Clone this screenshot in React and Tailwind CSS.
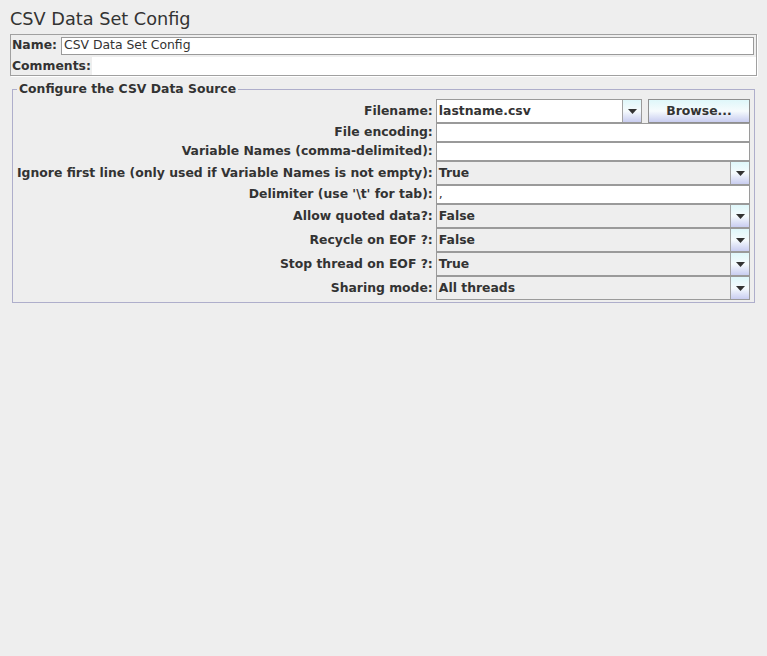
import React from "react";

const font = { fontFamily: '"DejaVu Sans", Verdana, sans-serif' };

function Arrow() {
  return (
    <div className="flex h-full w-[19px] shrink-0 items-center justify-center border-l border-[#a3a3a3] bg-gradient-to-b from-[#dff7fa] via-[#f6fbfd] to-[#c9cdf0]">
      <svg width="9" height="5" viewBox="0 0 9 5">
        <polygon points="0,0 9,0 4.5,5" fill="#333333" />
      </svg>
    </div>
  );
}

function Combo({ value, white }) {
  return (
    <div className={`flex h-[24px] items-stretch border border-[#9a9a9a] ${white ? "bg-white" : "bg-[#eeeeee]"}`}>
      <div className="flex flex-1 items-center pl-[2px] text-[12.4px] font-bold text-[#333333]">{value}</div>
      <Arrow />
    </div>
  );
}

function Field({ value }) {
  return (
    <div className="flex h-[19px] items-center border border-[#9a9a9a] bg-white pl-[2px] text-[12.4px] text-[#333333]">
      {value}
    </div>
  );
}

function Label({ children }) {
  return (
    <div className="flex items-center justify-end whitespace-nowrap text-[12.4px] font-bold text-[#333333]">
      {children}
    </div>
  );
}

export default function App() {
  return (
    <div className="min-h-[656px] w-[767px] bg-[#eeeeee] text-[#333333]" style={font}>
      <div className="pl-[10px] pt-[9px] text-[17.7px] leading-[20px]">CSV Data Set Config</div>
      <div className="mx-[10px] mt-[5px] h-[42px] border border-[#a0a0a0] shadow-[1px_1px_0_#ffffff]">
        <div className="flex h-[20px] items-center pl-[1px] pr-[2px] pt-[1px]">
          <span className="pr-[4px] text-[12.4px] font-bold">Name:</span>
          <div className="flex h-[18px] flex-1 items-center border border-[#9a9a9a] bg-white pl-[2px] text-[12.4px]">
            CSV Data Set Config
          </div>
        </div>
        <div className="mt-[2px] flex h-[18px] items-center pl-[1px]">
          <span className="pr-[1px] text-[12.4px] font-bold">Comments:</span>
          <div className="h-full flex-1 bg-white"></div>
        </div>
      </div>
      <div className="relative mx-[12px] mt-[13px] h-[214px] border border-[#aeaecb]">
        <span className="absolute -top-[9px] left-[4px] bg-[#eeeeee] px-[2px] text-[12.4px] font-bold leading-[16px]">
          Configure the CSV Data Source
        </span>
        <div className="grid grid-cols-[auto_1fr] gap-x-[3px] pl-[4px] pr-[4px] pt-[9px]">
          <Label>Filename:</Label>
          <div className="flex gap-[6px]">
            <div className="flex-1">
              <Combo value="lastname.csv" white />
            </div>
            <div className="flex h-[24px] w-[102px] items-center justify-center border border-[#8f8f8f] bg-gradient-to-b from-[#dff7fa] via-[#f6fbfd] to-[#c9cdf0] text-[12.4px] font-bold text-[#333333]">
              Browse...
            </div>
          </div>
          <Label>File encoding:</Label>
          <Field value="" />
          <Label>Variable Names (comma-delimited):</Label>
          <Field value="" />
          <Label>Ignore first line (only used if Variable Names is not empty):</Label>
          <Combo value="True" />
          <Label>Delimiter (use '\t' for tab):</Label>
          <Field value="," />
          <Label>Allow quoted data?:</Label>
          <Combo value="False" />
          <Label>Recycle on EOF ?:</Label>
          <Combo value="False" />
          <Label>Stop thread on EOF ?:</Label>
          <Combo value="True" />
          <Label>Sharing mode:</Label>
          <Combo value="All threads" />
        </div>
      </div>
    </div>
  );
}
